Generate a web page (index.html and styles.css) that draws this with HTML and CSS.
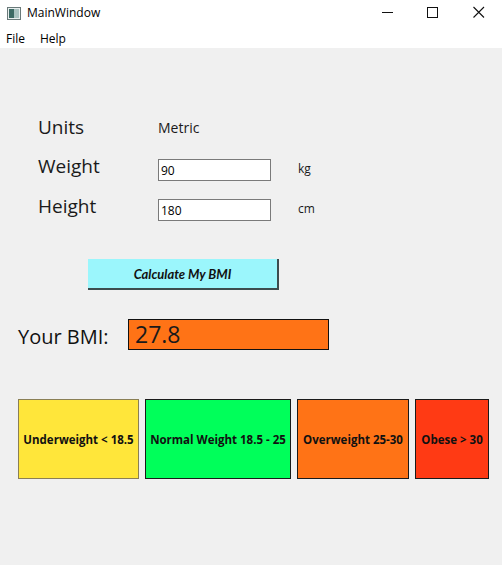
FILE: index.html
```html
<!DOCTYPE html>
<html>
<head>
<meta charset="utf-8">
<title>MainWindow</title>
<link rel="stylesheet" href="styles.css">
</head>
<body>
<div class="window">
  <header class="titlebar">
    <svg class="app-icon" width="14" height="13" viewBox="0 0 14 13">
      <rect x="0.5" y="0.5" width="13" height="12" fill="#e8eeee" stroke="#6a7a7a"/>
      <rect x="2" y="2" width="5" height="9" fill="#3c6a64"/>
      <rect x="7" y="2" width="5" height="9" fill="#a9c2c0"/>
    </svg>
    <span class="title">MainWindow</span>
    <div class="controls">
      <svg class="ctl" width="46" height="30" viewBox="0 0 46 30"><line x1="18" y1="12.5" x2="29" y2="12.5" stroke="#111" stroke-width="1"/></svg>
      <svg class="ctl" width="46" height="30" viewBox="0 0 46 30"><rect x="17.5" y="7.5" width="10" height="10" fill="none" stroke="#111" stroke-width="1"/></svg>
      <svg class="ctl" width="46" height="30" viewBox="0 0 46 30"><path d="M17.5 7 L28 17.5 M28 7 L17.5 17.5" stroke="#111" stroke-width="1.1"/></svg>
    </div>
  </header>
  <nav class="menubar">
    <span class="menu-item">File</span>
    <span class="menu-item">Help</span>
  </nav>
  <main class="content">
    <div class="form">
      <div class="row row-units">
        <span class="label">Units</span>
        <span class="value">Metric</span>
      </div>
      <div class="row row-weight">
        <span class="label">Weight</span>
        <input class="field" type="text" value="90">
        <span class="unit">kg</span>
      </div>
      <div class="row row-height">
        <span class="label">Height</span>
        <input class="field" type="text" value="180">
        <span class="unit">cm</span>
      </div>
    </div>
    <button class="calc">Calculate My BMI</button>
    <div class="result">
      <span class="result-label">Your BMI:</span>
      <div class="result-box">27.8</div>
    </div>
    <div class="categories">
      <div class="cat cat-under">Underweight &lt; 18.5</div>
      <div class="cat cat-normal">Normal Weight 18.5 - 25</div>
      <div class="cat cat-over">Overweight 25-30</div>
      <div class="cat cat-obese">Obese &gt; 30</div>
    </div>
  </main>
</div>
</body>
</html>
```
FILE: styles.css
```css
* { box-sizing: border-box; }
html, body {
  margin: 0;
  padding: 0;
  height: 100%;
}
body {
  background: #f0f0f0;
  font-family: "Open Sans", "Noto Sans", "Liberation Sans", sans-serif;
  color: #000;
}
.window {
  width: 502px;
  height: 565px;
  display: flex;
  flex-direction: column;
}
.titlebar {
  height: 30px;
  background: #fff;
  display: flex;
  align-items: center;
}
.app-icon {
  margin-left: 7px;
  margin-top: -3px;
}
.title {
  margin-left: 6px;
  font-size: 12px;
  margin-top: -5px;
  color: #000;
}
.controls {
  margin-left: auto;
  display: flex;
  align-self: flex-start;
}
.ctl { display: block; }
.menubar {
  height: 18px;
  background: #fff;
  display: flex;
  align-items: flex-start;
  padding-left: 6px;
}
.menu-item {
  font-size: 12px;
  line-height: 18px;
  margin-right: 15px;
  margin-top: 0px;
}
.content {
  flex: 1;
  display: flex;
  flex-direction: column;
}
.form {
  padding-left: 38px;
  display: flex;
  flex-direction: column;
}
.row {
  display: flex;
  align-items: flex-start;
  height: 22px;
}
.row-units { margin-top: 72px; }
.row-weight { margin-top: 17px; }
.row-height { margin-top: 18px; }
.label {
  width: 120px;
  font-size: 19px;
  line-height: 14px;
  color: #1a1a1a;
}
.value {
  font-size: 14px;
  line-height: 14px;
  margin-top: 1px;
  color: #1a1a1a;
}
.field {
  width: 113px;
  height: 22px;
  border: 1px solid #7a7a7a;
  background: #fff;
  font-family: "Open Sans", "Noto Sans", sans-serif;
  font-size: 12px;
  padding: 0 0 0 2px;
  margin: 0;
  color: #000;
  outline: none;
}
.unit {
  margin-left: 27px;
  font-size: 12px;
  line-height: 14px;
  margin-top: 3px;
  color: #1a1a1a;
}
.calc {
  margin: 38px 0 0 88px;
  width: 191px;
  height: 31px;
  background: #9bf6fc;
  border: none;
  border-right: 2px solid #3c4c4e;
  border-bottom: 2px solid #3c4c4e;
  font-family: "Lato", "Open Sans", sans-serif;
  font-weight: bold;
  font-style: italic;
  font-size: 13px;
  color: #111;
  padding: 0;
}
.result {
  display: flex;
  align-items: center;
  margin-top: 29px;
  padding-left: 18px;
}
.result-label {
  width: 110px;
  font-size: 20px;
  margin-top: 3px;
  color: #111;
}
.result-box {
  width: 201px;
  height: 31px;
  border: 1px solid #111;
  background: #ff7316;
  font-size: 23px;
  line-height: 29px;
  padding-left: 6px;
  color: #1a1a1a;
}
.categories {
  display: flex;
  margin-top: 49px;
  padding-left: 18px;
  gap: 6px;
}
.cat {
  height: 80px;
  display: flex;
  align-items: center;
  justify-content: center;
  font-size: 11.5px;
  font-weight: bold;
  border: 1px solid #1a1a1a;
  color: #111;
  white-space: nowrap;
}
.cat-under { width: 121px; background: #ffe63a; border-color: #8a7f55; }
.cat-normal { width: 146px; background: #00ff5a; }
.cat-over { width: 112px; background: #ff7316; }
.cat-obese { width: 74px; background: #ff3a14; }
```
